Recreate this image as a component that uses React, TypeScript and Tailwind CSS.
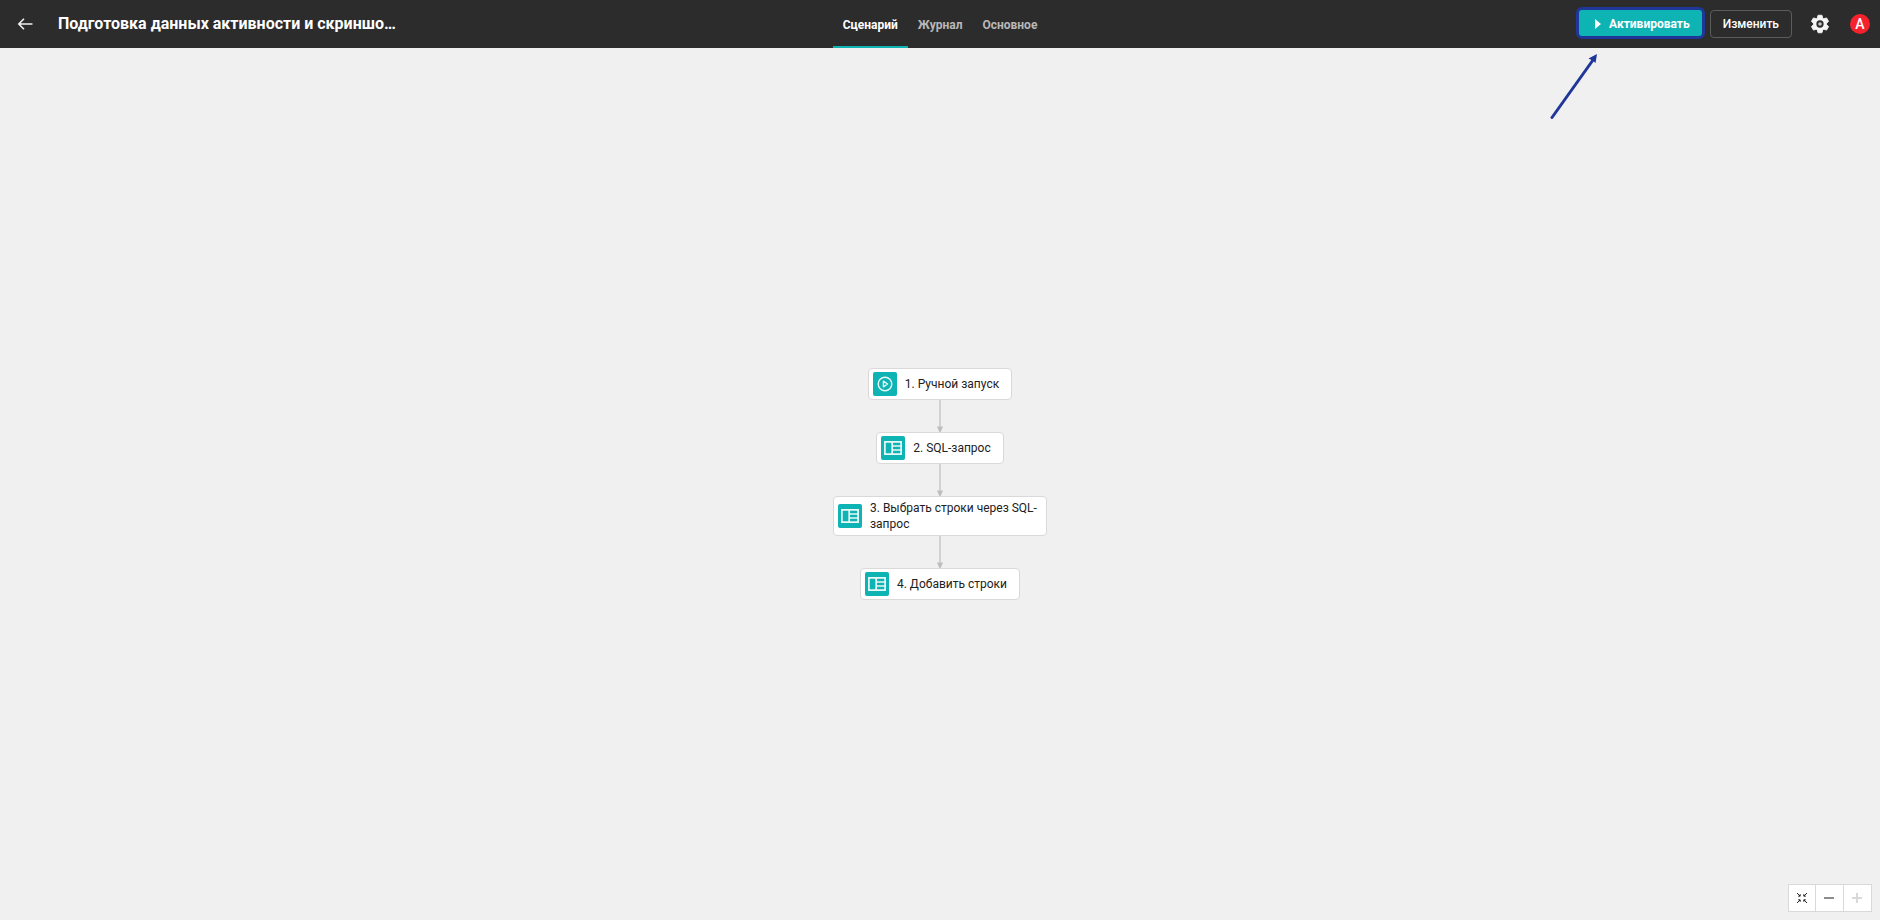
import { Fragment, useState } from 'react';

type IconName = 'play' | 'table';

interface Step {
  id: number;
  name: string;
  icon: IconName;
}

const tabs = ['Сценарий', 'Журнал', 'Основное'];

const steps: Step[] = [
  { id: 1, name: 'Ручной запуск', icon: 'play' },
  { id: 2, name: 'SQL-запрос', icon: 'table' },
  { id: 3, name: 'Выбрать строки через SQL-запрос', icon: 'table' },
  { id: 4, name: 'Добавить строки', icon: 'table' },
];

function StepIcon({ name }: { name: IconName }) {
  return (
    <span className="flex size-6 shrink-0 items-center justify-center rounded-xs bg-[#0eb3b3]">
      {name === 'play' ? (
        <svg width="16" height="16" viewBox="0 0 16 16" fill="none" stroke="#e9f8f8" strokeWidth="1.4">
          <circle cx="8" cy="8" r="6.8" />
          <path d="M6.4 5.2v5.6L10.6 8z" strokeLinejoin="round" />
        </svg>
      ) : (
        <svg width="18" height="14" viewBox="0 0 18 14" fill="none" stroke="#e9f8f8" strokeWidth="1.7">
          <path d="M.9.9h16.2v12.2H.9zM8.2.9v12.2M8.2 5h8.9M8.2 9h8.9" />
        </svg>
      )}
    </span>
  );
}

// Стрелка между шагами сценария
function Connector() {
  return (
    <svg width="8" height="32" viewBox="0 0 8 32" className="shrink-0">
      <path d="M4 0v28" stroke="#d2d2d2" strokeWidth="2" />
      <path d="M1 26.5h6L4.6 32H3.4z" fill="#bdbdbd" />
    </svg>
  );
}

export default function App() {
  const [activeTab, setActiveTab] = useState('Сценарий');

  return (
    <div className="relative flex min-h-screen flex-col bg-[#f0f0f0] font-[Roboto,sans-serif] text-[#212121]">
      <header className="grid h-12 grid-cols-[1fr_auto_1fr] items-center bg-[#2c2c2c] text-white">
        <div className="flex min-w-0 items-center gap-6 pl-4">
          <button type="button" aria-label="Назад" className="shrink-0">
            <svg width="18" height="16" viewBox="0 0 18 16" fill="none" stroke="#f0f0f0" strokeWidth="1.6">
              <path d="M16.5 8H3M8 2.8 2.8 8 8 13.2" />
            </svg>
          </button>
          <h1 className="text-base font-bold whitespace-nowrap">Подготовка данных активности и скриншо…</h1>
        </div>

        <nav className="flex h-full">
          {tabs.map((tab) => (
            <button
              key={tab}
              type="button"
              onClick={() => setActiveTab(tab)}
              className={`border-b-2 px-2.5 pt-1 text-xs font-bold ${
                tab === activeTab ? 'border-[#0eb3b3] text-white' : 'border-transparent text-[#b8b8b8]'
              }`}
            >
              {tab}
            </button>
          ))}
        </nav>

        <div className="flex items-center justify-end pr-2.5">
          <button
            type="button"
            className="mb-0.5 flex h-8 items-center gap-2 rounded-md border-3 border-[#1e3799] bg-[#0eb3b3] pt-0.5 pr-3 pl-4 text-xs font-bold"
          >
            <svg width="6" height="10" viewBox="0 0 6 10">
              <path d="M0 0v10l6-5z" fill="#fff" />
            </svg>
            Активировать
          </button>
          <button
            type="button"
            className="ml-[5px] h-7 rounded-sm border border-[#5c5c5c] px-3 text-xs font-medium"
          >
            Изменить
          </button>
          <button type="button" aria-label="Настройки" className="ml-[18px]">
            <svg width="20" height="20" viewBox="1 1 22 22">
              <path
                fill="#f5f5f5"
                stroke="#f5f5f5"
                strokeLinejoin="round"
                d="M19.14 12.94c.04-.3.06-.61.06-.94s-.02-.64-.07-.94l2.03-1.58a.49.49 0 0 0 .12-.61l-1.92-3.32a.49.49 0 0 0-.59-.22l-2.39.96a7 7 0 0 0-1.62-.94l-.36-2.54a.48.48 0 0 0-.48-.41h-3.84a.48.48 0 0 0-.47.41l-.36 2.54a7.4 7.4 0 0 0-1.62.94l-2.39-.96a.48.48 0 0 0-.59.22L2.74 8.87a.48.48 0 0 0 .12.61l2.03 1.58a6 6 0 0 0 0 1.88l-2.03 1.58a.49.49 0 0 0-.12.61l1.92 3.32c.12.22.37.29.59.22l2.39-.96c.5.38 1.03.7 1.62.94l.36 2.54c.05.24.24.41.48.41h3.84c.24 0 .44-.17.47-.41l.36-2.54a7.4 7.4 0 0 0 1.62-.94l2.39.96c.22.08.47 0 .59-.22l1.92-3.32a.48.48 0 0 0-.12-.61z"
              />
              <circle cx="12" cy="12" r="3" fill="#c4c4c4" stroke="#2c2c2c" strokeWidth="2" />
            </svg>
          </button>
          <button
            type="button"
            aria-label="Профиль"
            className="ml-5 flex size-5 items-center justify-center rounded-full bg-[#f5222d] text-sm leading-5 font-medium"
          >
            А
          </button>
        </div>
      </header>

      {/* Указатель на кнопку активации */}
      <svg
        width="48"
        height="68"
        viewBox="0 0 48 68"
        className="pointer-events-none absolute top-[52px] right-[282px]"
      >
        <path d="M2 65.5 43 8" stroke="#1e3799" strokeWidth="3" strokeLinecap="round" />
        <path d="M47 2 45.5 11 42.5 8.5 38.5 6.5z" fill="#1e3799" />
      </svg>

      <main className="flex flex-1 flex-col items-center justify-center">
        {steps.map((step, index) => (
          <Fragment key={step.id}>
            {index > 0 && <Connector />}
            <div
              className={`flex min-h-8 max-w-[214px] items-center gap-2 rounded-sm border border-[#d9d9d9] bg-white py-[3px] pl-1 text-xs leading-4 ${
                step.name.length > 20 ? 'pr-2' : 'pr-3'
              }`}
            >
              <StepIcon name={step.icon} />
              <span>{`${step.id}. ${step.name}`}</span>
            </div>
          </Fragment>
        ))}
      </main>

      <div className="absolute right-2 bottom-2 grid h-7 w-[84px] grid-cols-3 divide-x divide-[#d9d9d9] border border-[#d9d9d9] bg-white">
        <button type="button" aria-label="Вписать в экран" className="flex items-center justify-center">
          <svg width="12" height="12" viewBox="0 0 12 12" fill="none" stroke="#262626" strokeWidth="1">
            <path d="M1 1l3 3M4.2 2.2v2h-2M11 1 8 4M7.8 2.2v2h2M1 11l3-3M4.2 9.8v-2h-2M11 11 8 8M7.8 9.8v-2h2" />
          </svg>
        </button>
        <button type="button" aria-label="Уменьшить" className="flex items-center justify-center">
          <svg width="10" height="10" viewBox="0 0 10 10">
            <path d="M0 5h10" stroke="#8c8c8c" strokeWidth="2" />
          </svg>
        </button>
        <button type="button" aria-label="Увеличить" disabled className="flex items-center justify-center">
          <svg width="10" height="10" viewBox="0 0 10 10">
            <path d="M0 5h10M5 0v10" stroke="#d9d9d9" strokeWidth="2" />
          </svg>
        </button>
      </div>
    </div>
  );
}
